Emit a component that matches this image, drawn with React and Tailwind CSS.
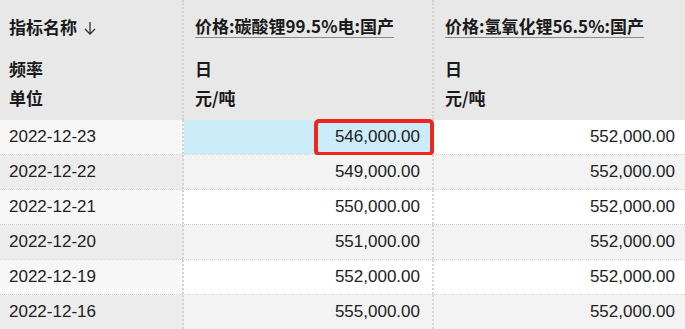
const rows = [
  { date: '2022-12-23', a: '546,000.00', b: '552,000.00' },
  { date: '2022-12-22', a: '549,000.00', b: '552,000.00' },
  { date: '2022-12-21', a: '550,000.00', b: '552,000.00' },
  { date: '2022-12-20', a: '551,000.00', b: '552,000.00' },
  { date: '2022-12-19', a: '552,000.00', b: '552,000.00' },
  { date: '2022-12-16', a: '555,000.00', b: '552,000.00' },
];

const cjk = "font-['Noto_Sans_CJK_SC',sans-serif]";
const num = "font-['Liberation_Sans',Arial,sans-serif]";

const HeadCol = ({ title, freq, unit, first }) => (
  <div className={`flex flex-col pt-[15px] ${first ? 'pl-[9px]' : 'pl-[11px]'} ${cjk} font-bold text-[17px] text-[#1a1a1a]`}>
    <div className="h-[25px] flex items-start">
      {first ? (
        <span className="leading-[24px] flex items-center gap-[6px]">
          {title}
          <svg width="14" height="16" viewBox="0 0 14 16" className="mt-[1px]">
            <path d="M7 2v12M2 9l5 5 5-5" fill="none" stroke="#333" strokeWidth="1.3" />
          </svg>
        </span>
      ) : (
        <span className="leading-[22px] border-b border-[#8a8a8a]">{title}</span>
      )}
    </div>
    <div className="leading-[28px] mt-[15px]">{freq}</div>
    <div className="leading-[28px] mt-[1px]">{unit}</div>
  </div>
);

export default function App() {
  return (
    <div className="w-[685px] h-[329px] overflow-hidden bg-white">
      <div className="grid grid-cols-[184px_250px_251px] h-[120px] bg-[#e8e8e8]">
        <div className="border-r-2 border-dotted border-[#d3d3d3]">
          <HeadCol first title="指标名称" freq="频率" unit="单位" />
        </div>
        <div className="border-r-2 border-dotted border-[#d3d3d3]">
          <HeadCol title="价格:碳酸锂99.5%电:国产" freq="日" unit="元/吨" />
        </div>
        <div>
          <HeadCol title="价格:氢氧化锂56.5%:国产" freq="日" unit="元/吨" />
        </div>
      </div>
      {rows.map((r, i) => {
        const odd = i % 2 === 0;
        return (
          <div key={r.date} className={`grid grid-cols-[184px_250px_251px] h-[35px] border-b border-dotted border-[#d0d0d0] ${num} text-[17px] text-[#222]`}>
            <div className={`flex items-center pl-[9px] border-r-2 border-dotted border-[#d3d3d3] ${odd ? 'bg-[#f7f7f7]' : 'bg-[#ececec]'}`}>
              {r.date}
            </div>
            <div className={`relative flex items-center justify-end pr-[12px] border-r-2 border-dotted border-[#d3d3d3] ${i === 0 ? 'bg-[#cdecf9]' : odd ? 'bg-white' : 'bg-[#f3f3f3]'}`}>
              {r.a}
              {i === 0 && (
                <div className="absolute left-[130px] right-[-2px] top-[-1px] bottom-[-2px] border-4 border-[#f0261c] rounded-[5px]" />
              )}
            </div>
            <div className={`flex items-center justify-end pr-[10px] ${odd ? 'bg-white' : 'bg-[#f3f3f3]'}`}>
              {r.b}
            </div>
          </div>
        );
      })}
    </div>
  );
}
